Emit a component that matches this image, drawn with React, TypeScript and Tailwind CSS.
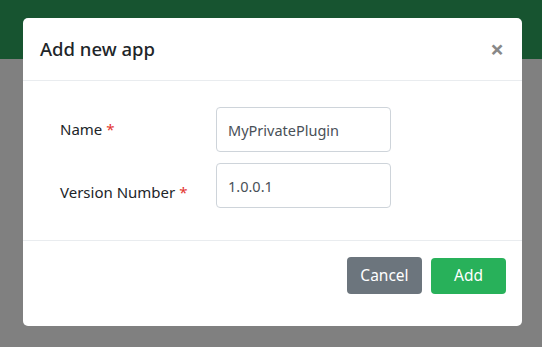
const App = () => {
  return (
    <div
      className="relative h-[347px] w-[542px] overflow-hidden bg-[#808080]"
      style={{ fontFamily: '"Noto Sans", "Open Sans", sans-serif' }}
    >
      <div className="h-[59px] bg-[#175430]" />

      <div className="absolute left-[23px] top-[18px] w-[499px] rounded-[5px] bg-white">
        <div className="flex h-[63px] items-center justify-between border-b border-[#e9ecef] pl-[17px] pr-[18px]">
          <h5 className="text-[18.5px] font-medium leading-none text-[#212529]">Add new app</h5>
          <button className="text-[24px] font-bold leading-none text-[#888888]">×</button>
        </div>

        <div className="grid grid-cols-[156px_175px] gap-y-[11px] pl-[37px] pb-[32px] pt-[26px]">
          <label className="flex items-center text-[15px] text-[#212529]">
            Name <span className="ml-1 text-[#e3342f]">*</span>
          </label>
          <input
            readOnly
            value="MyPrivatePlugin"
            className="h-[45px] rounded-[4px] border border-[#ced4da] px-[11px] text-[14.5px] text-[#495057] outline-none"
          />
          <label className="flex items-center pt-[14px] text-[15px] text-[#212529]">
            Version Number <span className="ml-1 text-[#e3342f]">*</span>
          </label>
          <input
            readOnly
            value="1.0.0.1"
            className="h-[45px] rounded-[4px] border border-[#ced4da] px-[11px] text-[14.5px] text-[#495057] outline-none"
          />
        </div>

        <div className="flex h-[86px] items-start justify-end gap-[9px] border-t border-[#e9ecef] pr-[16px] pt-[16px]">
          <button className="h-[37px] w-[75px] rounded-[4px] bg-[#6c757d] text-[15.5px] text-white">Cancel</button>
          <button className="mt-px h-[36px] w-[75px] rounded-[4px] bg-[#28b15a] text-[15.5px] text-white">Add</button>
        </div>
      </div>
    </div>
  );
};

export default App;
